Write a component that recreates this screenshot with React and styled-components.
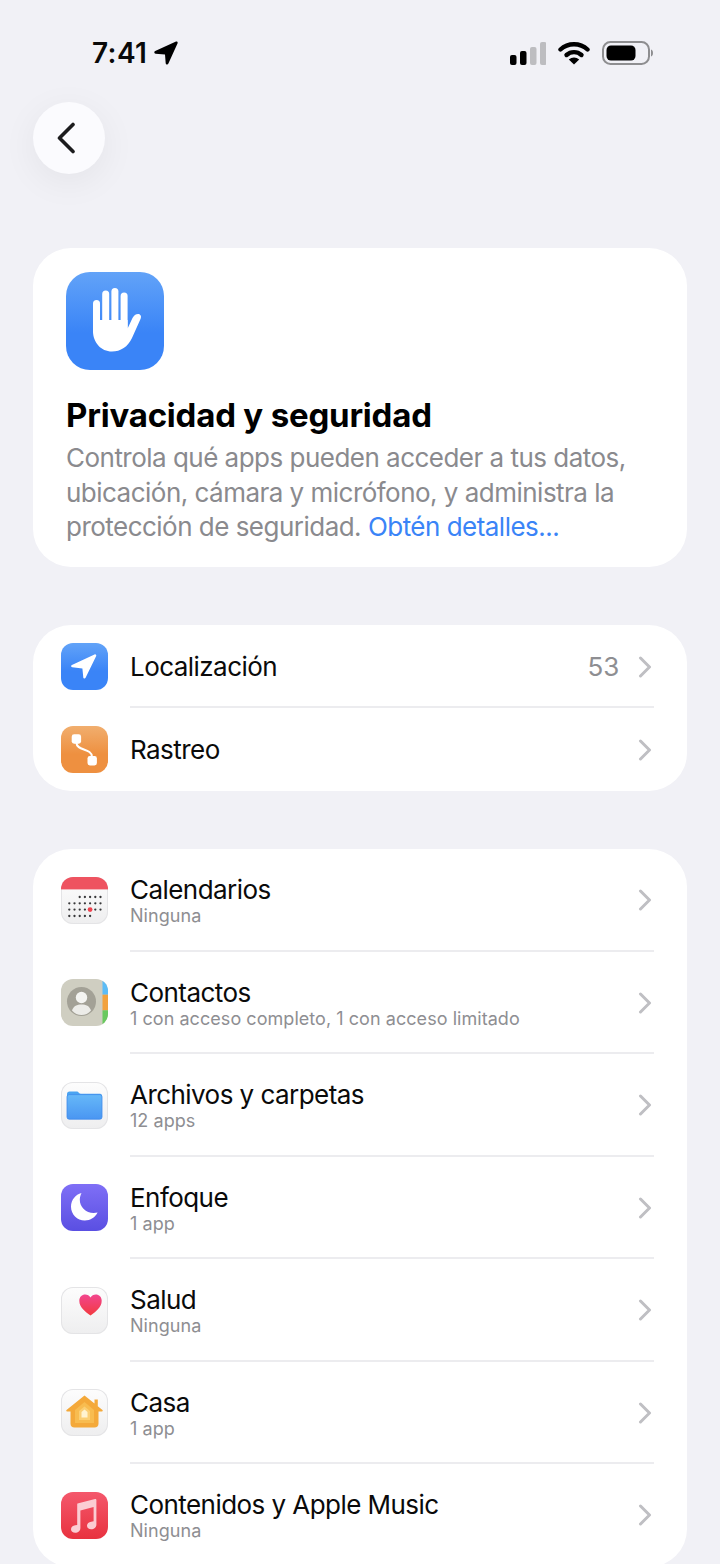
import React from "react";
import styled, { createGlobalStyle } from "styled-components";

const GlobalStyle = createGlobalStyle`
  html, body {
    margin: 0;
    padding: 0;
    background: #f1f1f6;
  }
  * { box-sizing: border-box; }
`;

const Page = styled.div`
  width: 720px;
  height: 1564px;
  overflow: hidden;
  background: #f1f1f6;
  font-family: Inter, "Liberation Sans", sans-serif;
  color: #000;
`;

const StatusBar = styled.div`
  height: 102px;
  padding: 41px 67px 0 92px;
  display: flex;
  justify-content: space-between;
  align-items: flex-start;
`;

const TimeGroup = styled.div`
  display: flex;
  align-items: center;
  gap: 7px;
  height: 24px;
`;

const Time = styled.span`
  font-size: 28px;
  font-weight: 600;
  line-height: 24px;
  letter-spacing: 0.4px;
  color: #0a0a0a;
`;

const StatusIcons = styled.div`
  display: flex;
  align-items: center;
  gap: 12px;
  height: 24px;
`;

const BackButton = styled.div`
  width: 72px;
  height: 72px;
  margin-left: 33px;
  border-radius: 50%;
  background: #fbfbfe;
  box-shadow: 0 8px 36px rgba(0, 0, 0, 0.06);
  display: flex;
  align-items: center;
  justify-content: center;
  padding-right: 6px;
`;

const Stack = styled.div`
  margin: 74px 33px 0;
  display: flex;
  flex-direction: column;
  gap: 58px;
`;

const HeroCard = styled.section`
  background: #fff;
  border-radius: 38px;
  height: 319px;
  padding: 24px 33px 0;
`;

const HeroIcon = styled.div`
  width: 98px;
  height: 98px;
  border-radius: 24px;
  background: linear-gradient(#62a3f8, #3a84f7 62%);
`;

const HeroTitle = styled.h1`
  margin: 25px 0 0;
  font-size: 33px;
  line-height: 40px;
  font-weight: 700;
  letter-spacing: -0.2px;
`;

const HeroText = styled.p`
  margin: 6px 0 0;
  font-size: 26px;
  line-height: 34.5px;
  letter-spacing: -0.52px;
  color: #8a8a8e;
`;

const HeroLink = styled.span`
  color: #3a84f7;
`;

const Group = styled.section`
  background: #fff;
  border-radius: 38px;
  padding: 0 33px 0 28px;
`;

const Row = styled.div`
  display: flex;
  align-items: center;
  gap: 22px;
  height: ${(p) => (p.$tall ? "102.5px" : "83px")};
`;

const RowBody = styled.div`
  flex: 1;
  align-self: stretch;
  display: flex;
  align-items: center;
  gap: 19px;
  box-shadow: ${(p) => (p.$last ? "none" : "inset 0 -2px 0 #ececef")};
`;

const RowText = styled.div`
  flex: 1;
  display: flex;
  flex-direction: column;
`;

const RowTitle = styled.div`
  font-size: 26px;
  line-height: 32px;
  letter-spacing: -0.55px;
  color: #0a0a0a;
`;

const RowSub = styled.div`
  font-size: 18px;
  line-height: 20px;
  letter-spacing: 0.05px;
  color: #8e8e92;
`;

const RowValue = styled.span`
  font-size: 26px;
  letter-spacing: -0.2px;
  color: #8e8e92;
`;

const Chevron = styled.svg`
  width: 14px;
  height: 22px;
  margin-right: 2px;
  flex: none;
`;

const AppIcon = styled.div`
  width: 47px;
  height: 47px;
  flex: none;
  border-radius: 12px;
  overflow: hidden;
  background: ${(p) => p.$bg};
  box-shadow: ${(p) => (p.$outlined ? "inset 0 0 0 1px #e4e4e6" : "none")};

  svg {
    display: block;
    width: 47px;
    height: 47px;
  }
`;

const RowChevron = () => (
  <Chevron viewBox="0 0 14 22" fill="none">
    <path d="M2.5 2 L11.5 11 L2.5 20" stroke="#bfbfc3" strokeWidth="3" strokeLinecap="round" strokeLinejoin="round" />
  </Chevron>
);

const Signal = () => (
  <svg width="36" height="23" viewBox="0 0 36 23">
    <rect x="0" y="13" width="6.5" height="10" rx="2" fill="#000" />
    <rect x="10" y="9" width="6.5" height="14" rx="2" fill="#000" />
    <rect x="20" y="5" width="6.5" height="18" rx="2" fill="#bdbdc0" />
    <rect x="30" y="0" width="6.5" height="23" rx="2" fill="#bdbdc0" />
  </svg>
);

const Wifi = () => (
  <svg width="32" height="24" viewBox="0 0 32 24" fill="none">
    <path d="M2.5 8.5 C10 1.5 22 1.5 29.5 8.5" stroke="#000" strokeWidth="4.4" strokeLinecap="round" />
    <path d="M8.5 14 C12.8 10.2 19.2 10.2 23.5 14" stroke="#000" strokeWidth="4.4" strokeLinecap="round" />
    <path d="M16 23.5 L10.8 18.6 C13.8 15.9 18.2 15.9 21.2 18.6 Z" fill="#000" />
  </svg>
);

const Battery = () => (
  <svg width="51" height="24" viewBox="0 0 51 24">
    <rect x="1" y="1" width="46" height="22" rx="7.5" fill="none" stroke="#8e8e90" strokeWidth="2" />
    <rect x="4.5" y="4.5" width="29" height="15" rx="4.5" fill="#000" />
    <path d="M49 8.5 C50.4 9 51 10.4 51 12 C51 13.6 50.4 15 49 15.5 Z" fill="#8e8e90" />
  </svg>
);

const HandIcon = () => (
  <svg width="98" height="98" viewBox="0 0 98 98" fill="#fff">
    <rect x="27" y="28" width="7" height="34" rx="3.5" />
    <rect x="36.2" y="18.5" width="7" height="40" rx="3.5" />
    <rect x="45.4" y="16" width="7" height="40" rx="3.5" />
    <rect x="54.6" y="20.5" width="7" height="40" rx="3.5" />
    <path d="M27 48 H61.6 V56.5 L66.5 46 C68 42.8 71.5 41 73.8 42.4 C75.4 43.4 75.2 45.4 74.4 47.2 L66 66 C62 74.8 54.5 79.5 46 79.5 C35 79.5 27 70.5 27 59 Z" />
  </svg>
);

const ArrowIcon = () => (
  <svg viewBox="0 0 47 47">
    <path
      d="M33.5 11.5 C34.6 11 35.6 12 35.2 13.1 L24.6 34.8 C24 36 22.4 35.7 22.3 34.4 L21.4 25.4 L11.3 24.2 C10 24 9.7 22.5 10.9 21.9 Z"
      fill="#fff"
    />
  </svg>
);

const TrackIcon = () => (
  <svg viewBox="0 0 47 47" fill="none">
    <path d="M15.5 17 C15.5 25 31 22 31 31" stroke="#fff" strokeWidth="2" />
    <rect x="10.7" y="8.3" width="9.4" height="9.4" rx="2.4" fill="#fff" />
    <rect x="26.5" y="30" width="9.4" height="9.4" rx="2.4" fill="#fff" />
  </svg>
);

const calendarDots = [];
[20, 26.3, 32.6, 39].forEach((y, r) => {
  for (let c = 0; c < 7; c++) {
    if ((r === 0 && c < 2) || (r === 3 && c > 4)) continue;
    if (r === 2 && c === 4) continue;
    calendarDots.push([8.3 + c * 5.2, y]);
  }
});

const CalendarIcon = () => (
  <svg viewBox="0 0 47 47">
    <rect width="47" height="12.4" fill="#ee5360" />
    {calendarDots.map(([x, y]) => (
      <circle key={x + "-" + y} cx={x} cy={y} r="1.15" fill="#38383a" />
    ))}
    <circle cx="29.1" cy="32.6" r="2.4" fill="#f0434f" />
  </svg>
);

const ContactsIcon = () => (
  <svg viewBox="0 0 47 47">
    <rect x="41.5" width="5.5" height="15.7" fill="#5cbcf6" />
    <rect x="41.5" y="15.7" width="5.5" height="15.7" fill="#f2a23e" />
    <rect x="41.5" y="31.3" width="5.5" height="15.7" fill="#69c95f" />
    <circle cx="20.5" cy="22.5" r="14.5" fill="#a3a196" />
    <circle cx="20.5" cy="18.5" r="5.7" fill="#f4f4f1" />
    <path d="M11 31.5 C12.5 27 16 25.5 20.5 25.5 C25 25.5 28.5 27 30 31.5 C25 37.5 16 37.5 11 31.5 Z" fill="#ecece8" />
  </svg>
);

const FolderIcon = () => (
  <svg viewBox="0 0 47 47">
    <path d="M6 12 C6 10.5 7 9.5 8.5 9.5 H16 C17.5 9.5 18 11.8 20 11.8 H39 C40.5 11.8 41 13 41 14 V18 H6 Z" fill="#4aa4f2" />
    <rect x="6" y="12.6" width="35" height="24.6" rx="2.2" fill="url(#folderFill)" stroke="#3f8ceb" strokeWidth="0.8" />
    <defs>
      <linearGradient id="folderFill" x1="0" y1="0" x2="0" y2="1">
        <stop offset="0" stopColor="#66b8f8" />
        <stop offset="1" stopColor="#4a96f2" />
      </linearGradient>
    </defs>
  </svg>
);

const MoonIcon = () => (
  <svg viewBox="0 0 47 47">
    <path
      d="M20.5 9 C14.5 10.5 10 16 10 22.8 C10 30.4 16.2 36.6 23.8 36.6 C29.4 36.6 34.2 33.4 36.6 28.6 C27 31 18.6 24.2 18.8 15.6 C18.9 13.2 19.5 11 20.5 9 Z"
      fill="#fff"
    />
  </svg>
);

const HeartIcon = () => (
  <svg viewBox="0 0 47 47">
    <defs>
      <linearGradient id="heartFill" x1="0" y1="0" x2="0" y2="1">
        <stop offset="0" stopColor="#f2468f" />
        <stop offset="1" stopColor="#f23a3f" />
      </linearGradient>
    </defs>
    <path
      d="M29.5 28.5 C24 24.5 18.3 20.5 18.3 13.8 C18.3 9.8 21 7.4 24.2 7.4 C26.5 7.4 28.3 8.6 29.5 10.6 C30.7 8.6 32.5 7.4 34.8 7.4 C38 7.4 40.7 9.8 40.7 13.8 C40.7 20.5 35 24.5 29.5 28.5 Z"
      fill="url(#heartFill)"
    />
  </svg>
);

const HomeIcon = () => (
  <svg viewBox="0 0 47 47">
    <path
      d="M23.5 6.5 L33.5 14.5 V10.5 H36.8 V17.3 L41.5 21 C42 21.5 41.7 22.5 41 22.5 H37.5 V34.5 C37.5 37 36 38.5 33.5 38.5 H13.5 C11 38.5 9.5 37 9.5 34.5 V22.5 H6 C5.3 22.5 5 21.5 5.5 21 Z"
      fill="#f4a93a"
    />
    <path d="M23.5 13 L33 21 V34 H14 V21 Z" fill="#f8bc50" />
    <path d="M23.5 17.5 L29 22 V31 H18 V22 Z" fill="#fbcf74" />
    <path d="M23.5 20.5 L26.5 23 V28.5 H20.5 V23 Z" fill="#fff3d0" />
  </svg>
);

const MusicIcon = () => (
  <svg viewBox="0 0 47 47" fill="#fbcdd3">
    <path d="M16.5 11.6 L34 7 C34.8 6.8 35.4 7.3 35.4 8.1 V32.5 C35.4 35.5 33 37.3 30.2 37.3 C27.8 37.3 26 35.9 26 33.8 C26 31.6 27.8 30.3 30.2 29.8 L32.6 29.3 V15 L19.4 18.4 V36 C19.4 39 17 40.8 14.2 40.8 C11.8 40.8 10 39.4 10 37.3 C10 35.1 11.8 33.8 14.2 33.3 L16.2 32.9 V12.4 C16.2 12 16.3 11.7 16.5 11.6 Z" />
  </svg>
);

const topRows = [
  { title: "Localización", value: "53", bg: "linear-gradient(#62a3f8, #3a84f7 60%)", icon: <ArrowIcon /> },
  { title: "Rastreo", bg: "linear-gradient(#f1ae6e, #ee9040 60%)", icon: <TrackIcon /> },
];

const whiteIcon = "linear-gradient(#fdfdfd, #eeeeef)";

const appRows = [
  { title: "Calendarios", sub: "Ninguna", bg: whiteIcon, outlined: true, icon: <CalendarIcon /> },
  {
    title: "Contactos",
    sub: "1 con acceso completo, 1 con acceso limitado",
    bg: "#cfcec1",
    icon: <ContactsIcon />,
  },
  { title: "Archivos y carpetas", sub: "12 apps", bg: whiteIcon, outlined: true, icon: <FolderIcon /> },
  { title: "Enfoque", sub: "1 app", bg: "linear-gradient(#7f6ff6, #5a4fe2)", icon: <MoonIcon /> },
  { title: "Salud", sub: "Ninguna", bg: whiteIcon, outlined: true, icon: <HeartIcon /> },
  { title: "Casa", sub: "1 app", bg: whiteIcon, outlined: true, icon: <HomeIcon /> },
  { title: "Contenidos y Apple Music", sub: "Ninguna", bg: "linear-gradient(#f4586c, #e8323f)", icon: <MusicIcon /> },
];

export default function App() {
  return (
    <Page>
      <GlobalStyle />
      <StatusBar>
        <TimeGroup>
          <Time>7:41</Time>
          <svg width="24" height="24" viewBox="0 0 24 24">
            <path
              d="M22 .6 C23 .2 24 1.1 23.6 2.2 L14.4 22.6 C13.8 24 11.8 23.7 11.7 22.2 L11 13.6 L1.6 12.8 C.1 12.6 -.2 10.7 1.2 10 Z"
              fill="#000"
            />
          </svg>
        </TimeGroup>
        <StatusIcons>
          <Signal />
          <Wifi />
          <Battery />
        </StatusIcons>
      </StatusBar>
      <BackButton>
        <svg width="20" height="32" viewBox="0 0 20 32" fill="none">
          <path d="M17 2.5 L3.5 16 L17 29.5" stroke="#1c1c1e" strokeWidth="3.6" strokeLinecap="round" strokeLinejoin="round" />
        </svg>
      </BackButton>
      <Stack>
        <HeroCard>
          <HeroIcon>
            <HandIcon />
          </HeroIcon>
          <HeroTitle>Privacidad y seguridad</HeroTitle>
          <HeroText>
            Controla qué apps pueden acceder a tus datos, ubicación, cámara y micrófono, y administra la protección de
            seguridad. <HeroLink>Obtén detalles...</HeroLink>
          </HeroText>
        </HeroCard>
        <Group>
          {topRows.map((row, i) => (
            <Row key={row.title}>
              <AppIcon $bg={row.bg}>{row.icon}</AppIcon>
              <RowBody $last={i === topRows.length - 1}>
                <RowText>
                  <RowTitle>{row.title}</RowTitle>
                </RowText>
                {row.value && <RowValue>{row.value}</RowValue>}
                <RowChevron />
              </RowBody>
            </Row>
          ))}
        </Group>
        <Group>
          {appRows.map((row, i) => (
            <Row key={row.title} $tall>
              <AppIcon $bg={row.bg} $outlined={row.outlined}>
                {row.icon}
              </AppIcon>
              <RowBody $last={i === appRows.length - 1}>
                <RowText>
                  <RowTitle>{row.title}</RowTitle>
                  <RowSub>{row.sub}</RowSub>
                </RowText>
                <RowChevron />
              </RowBody>
            </Row>
          ))}
        </Group>
      </Stack>
    </Page>
  );
}
